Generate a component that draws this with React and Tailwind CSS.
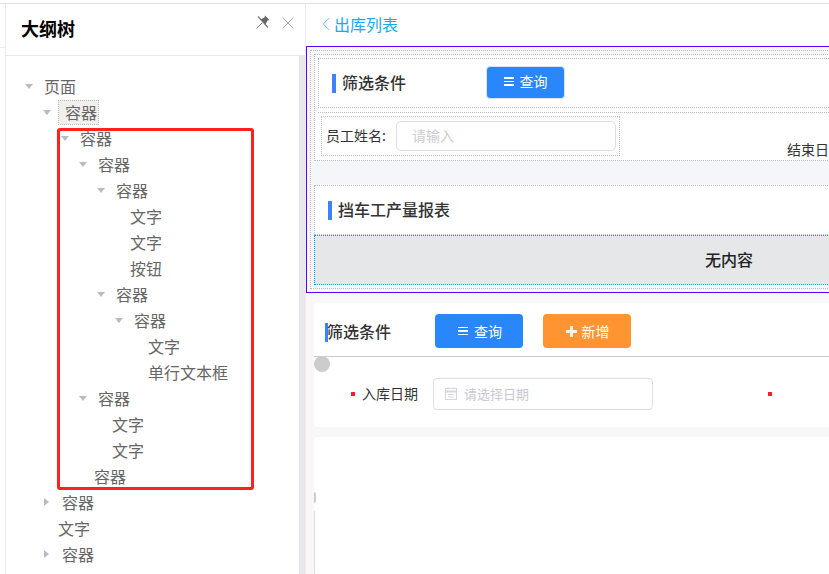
import React from 'react';
import { ChevronLeft, X } from 'lucide-react';

const rows = [
  { pad: 'pl-[19px]', label: '页面', arrow: 'down' },
  { pad: 'pl-[37px]', label: '容器', arrow: 'down', selected: true },
  { pad: 'pl-[55px]', label: '容器', arrow: 'down' },
  { pad: 'pl-[73px]', label: '容器', arrow: 'down' },
  { pad: 'pl-[91px]', label: '容器', arrow: 'down' },
  { pad: 'pl-[124px]', label: '文字' },
  { pad: 'pl-[124px]', label: '文字' },
  { pad: 'pl-[124px]', label: '按钮' },
  { pad: 'pl-[91px]', label: '容器', arrow: 'down' },
  { pad: 'pl-[109px]', label: '容器', arrow: 'down' },
  { pad: 'pl-[142px]', label: '文字' },
  { pad: 'pl-[142px]', label: '单行文本框' },
  { pad: 'pl-[73px]', label: '容器', arrow: 'down' },
  { pad: 'pl-[106px]', label: '文字' },
  { pad: 'pl-[106px]', label: '文字' },
  { pad: 'pl-[88px]', label: '容器' },
  { pad: 'pl-[38px]', label: '容器', arrow: 'right' },
  { pad: 'pl-[52px]', label: '文字' },
  { pad: 'pl-[38px]', label: '容器', arrow: 'right' },
];

const TreeRow = ({ row }) => (
  <div className={`flex h-[26px] items-center ${row.pad}`}>
    {row.arrow === 'down' && (
      <span className="mr-[11px] h-0 w-0 border-x-[4px] border-t-[5px] border-x-transparent border-t-[#b9bcc4]" />
    )}
    {row.arrow === 'right' && (
      <span className="mr-[13px] h-0 w-0 border-y-[4px] border-l-[5px] border-y-transparent border-l-[#b9bcc4]" />
    )}
    {row.selected ? (
      <span className="-ml-[4px] flex h-[25px] items-center border border-dotted border-[#bbb] bg-[#f3eeee] pr-[1px] pl-[6px]">{row.label}</span>
    ) : (
      <span>{row.label}</span>
    )}
  </div>
);

const Title = ({ children }) => (
  <div className="flex items-center">
    <span className="h-[19px] w-[4px] bg-[#3d83f7]" />
    <span className="-mt-[2px] ml-[6px] text-[16px] font-medium text-[#333]">{children}</span>
  </div>
);

const MenuIcon = () => (
  <span className="flex w-[10px] flex-col gap-[2px]">
    <span className="h-[1.5px] bg-white" />
    <span className="h-[1.5px] bg-white" />
    <span className="h-[1.5px] bg-white" />
  </span>
);

const PinIcon = () => (
  <svg width="14" height="14" viewBox="0 0 14 14" className="mt-[11px] mr-[8px] shrink-0">
    <path d="M9 0.5 L13.5 5 L11.5 5.5 L9.5 9.5 L4.5 4.5 L8.5 2.5 Z" fill="#666" />
    <path d="M0.5 13.5 L6 8" stroke="#777" strokeWidth="1" />
    <path d="M2 1.5 L12 12.5" stroke="#777" strokeWidth="1.2" />
  </svg>
);

const CalendarIcon = () => (
  <svg width="12" height="13" viewBox="0 0 12 13" className="shrink-0" fill="none" stroke="#d6d6df">
    <path d="M3 0 V2 M9 0 V2" />
    <rect x="0.5" y="1.5" width="11" height="11" />
    <path d="M0.5 4.5 H11.5" strokeWidth="2" />
    <path d="M3 7.5 H9 M3 10 H9" />
  </svg>
);

const PlusIcon = () => (
  <svg width="11" height="11" viewBox="0 0 11 11" className="shrink-0">
    <path d="M4 0 H7 V4 H11 V7 H7 V11 H4 V7 H0 V4 H4 Z" fill="#f4f1ec" />
  </svg>
);

export default function App() {
  return (
    <div className="flex h-[574px] w-[829px] flex-col overflow-hidden bg-white font-['Noto_Sans_CJK_SC','Liberation_Sans',sans-serif]">
      <div className="h-[4px] shrink-0 border-b border-[#e0e0e0]" />
      <div className="flex min-h-0 flex-1">
        <div className="w-[5px] shrink-0">
          <div className="h-[44px] border-b border-[#f3e8ec]" />
        </div>

        {/* outline tree */}
        <div className="flex w-[301px] shrink-0 flex-col border-x border-[#f3e8ec]">
          <div className="flex h-[52px] shrink-0 items-start border-b border-[#e6e6ee] pl-[15px]">
            <h2 className="mt-[11px] flex-1 text-[18px] leading-[26px] font-bold text-black">大纲树</h2>
            <PinIcon />
            <X className="mt-[9px] mr-[7px] text-[#8a8a96]" size={20} strokeWidth={0.9} />
          </div>
          <div className="flex min-h-0 flex-1">
            <div className="relative flex-1 pt-[17px] text-[16px] text-[#666]">
              <div className="relative">
                {rows.map((row, i) => (
                  <TreeRow key={i} row={row} />
                ))}
                <div className="absolute top-[55px] left-[51px] h-[362px] w-[197px] rounded-[3px] border-[3px] border-[#ff2020]" />
              </div>
            </div>
            <div className="w-[6px] bg-[#e8e8ea]" />
          </div>
        </div>

        {/* page canvas */}
        <div className="flex min-w-0 flex-1 flex-col overflow-hidden bg-[#f8f8f8]">
          <div className="flex h-[42px] shrink-0 items-center bg-white pb-[2px] pl-[10px] text-[16px] text-[#18a9f5]">
            <ChevronLeft size={22} strokeWidth={1} className="-ml-[1px] text-[#5aa8f5]" />
            <span className="-ml-[3px]">出库列表</span>
          </div>

          <div className="h-[247px] w-[700px] shrink-0 border border-[#5500ff] bg-[#f5f6fa] p-[3px]">
            <div className="flex h-full flex-col border border-dotted border-[#bbb] p-[3px]">
              <div className="h-[107px] shrink-0 border border-dotted border-[#bbb] bg-white pt-[3px]">
                <div className="ml-[3px] flex h-[50px] items-center border border-dotted border-[#bbb] pl-[13px]">
                  <Title>筛选条件</Title>
                  <button className="-mt-[2px] ml-[80px] flex h-[33px] w-[79px] items-center justify-center gap-[6px] rounded-[4px] border border-[#dbe4f0] bg-[#2a86fb] pb-[1px] text-[14px] text-white">
                    <MenuIcon />
                    查询
                  </button>
                </div>
                <div className="mt-[4px] ml-[3px] flex items-end border-t border-dotted border-[#bbb] pt-[3px] pl-[3px]">
                  <div className="flex h-[40px] w-[299px] items-center border border-dotted border-[#bbb] pl-[4px] text-[14px] text-[#333]">
                    <span className="-mt-[1px] w-[70px]">员工姓名:</span>
                    <div className="flex h-[30px] w-[220px] items-center rounded-[5px] border border-[#ddd] pb-[1px] pl-[15px] text-[#ccc]">请输入</div>
                  </div>
                  <span className="ml-[167px] -mb-[3px] text-[14px] leading-[20px] text-[#333]">结束日</span>
                </div>
              </div>
              <div className="mt-[24px] flex h-[50px] shrink-0 items-center border border-dotted border-[#bbb] bg-white pl-[13px]">
                <Title>挡车工产量报表</Title>
              </div>
              <div className="flex h-[50px] shrink-0 items-center border border-dotted border-[#0a9cf0] bg-[#e6e7e9] pb-[3px] pl-[390px] text-[16px] font-medium text-[#222]">
                无内容
              </div>
            </div>
          </div>

          <div className="relative mt-[10px] ml-[8px] h-[124px] w-[700px] shrink-0 rounded-[4px] bg-white">
            <div className="flex h-[54px] items-start border-b border-[#ccc] pt-[11px] pl-[11px]">
              <div className="mt-[8px] flex items-center">
                <span className="h-[19px] w-[3px] bg-[#3d83f7]" />
                <span className="-mt-[3px] -ml-[1px] text-[16px] font-medium text-[#333]">筛选条件</span>
              </div>
              <button className="ml-[44px] flex h-[34px] w-[88px] items-center justify-center gap-[6px] rounded-[4px] bg-[#2a86fb] pl-[2px] text-[14px] text-white">
                <MenuIcon />
                查询
              </button>
              <button className="ml-[20px] flex h-[34px] w-[88px] items-center justify-center gap-[5px] rounded-[4px] bg-[#ff9431] pl-[1px] text-[14px] text-white">
                <PlusIcon />
                新增
              </button>
            </div>
            <span className="absolute top-[53px] left-0 h-[16px] w-[16px] rounded-full bg-[#ccc]" />
            <div className="mt-[21px] flex items-center pl-[37px] text-[13px]">
              <span className="h-[4px] w-[4px] bg-[#ff1a2e]" />
              <span className="-mt-[1px] ml-[7px] w-[71px] text-[14px] text-[#333]">入库日期</span>
              <div className="flex h-[32px] w-[220px] items-center rounded-[4px] border border-[#dddde6] pb-[1px] pl-[11px] text-[#c8c8d0]">
                <CalendarIcon />
                <span className="ml-[7px]">请选择日期</span>
              </div>
              <span className="ml-[115px] h-[4px] w-[4px] bg-[#ff1a2e]" />
            </div>
          </div>

          <div className="relative mt-[10px] ml-[8px] w-[700px] flex-1 rounded-[4px] bg-white">
            <span className="absolute top-[55px] left-0 h-[11px] w-[2px] rounded-r-full bg-[#ccc]" />
            <span className="absolute top-[74px] bottom-0 left-0 w-px bg-[#ddd]" />
          </div>
        </div>
      </div>
    </div>
  );
}
